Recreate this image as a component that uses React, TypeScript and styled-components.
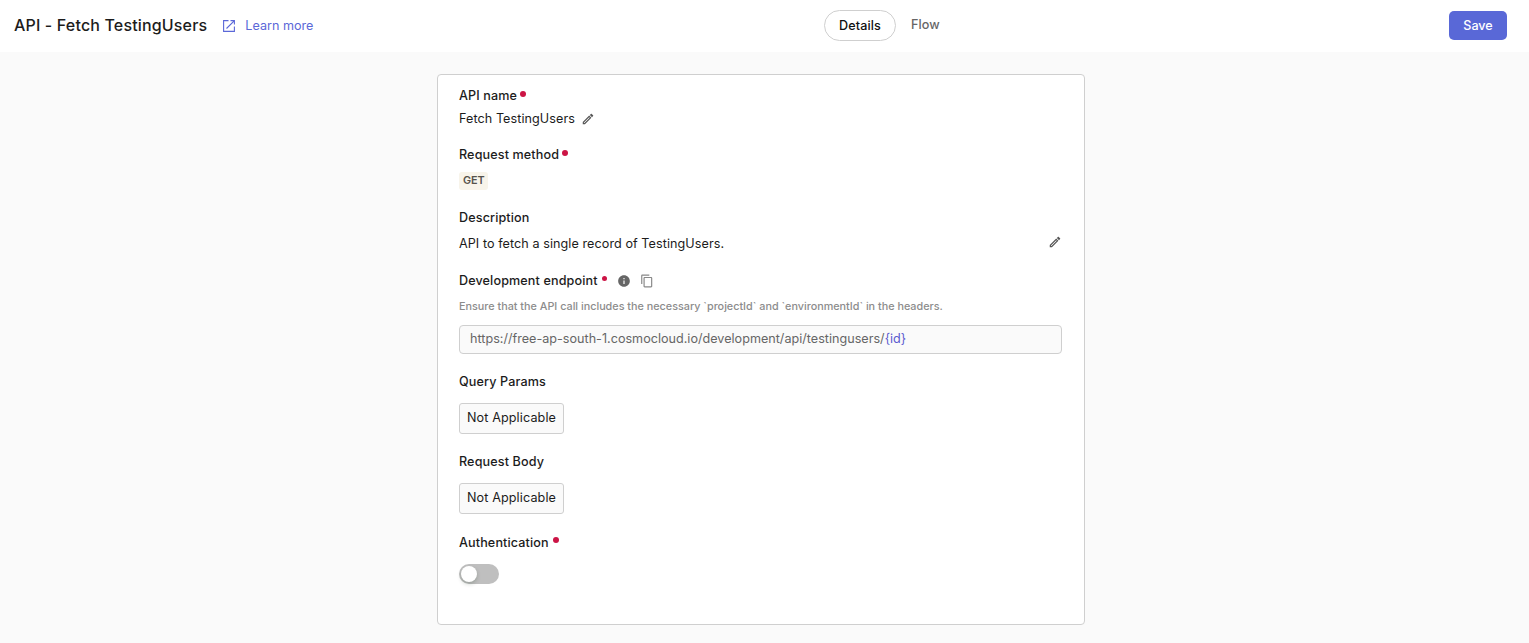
import React from "react";
import styled, { createGlobalStyle } from "styled-components";
import { MdContentCopy, MdInfo, MdOutlineEdit } from "react-icons/md";

const GlobalStyle = createGlobalStyle`
  * { box-sizing: border-box; }
  body {
    margin: 0;
    background: #fafafa;
    color: #1c1c1c;
    font-family: Inter, "Liberation Sans", sans-serif;
    font-size: 12.6px;
  }
`;

const Page = styled.div`
  min-height: 643px;
`;

const Header = styled.header`
  display: grid;
  grid-template-columns: 810px auto 1fr;
  height: 52px;
  padding: 0 22px 0 14px;
  background: #fff;
`;

const HeaderLeft = styled.div`
  display: flex;
  align-items: center;
  height: 51px;
`;

const Title = styled.h1`
  margin: 0 0 1px;
  font-size: 16px;
  font-weight: 500;
  line-height: 20px;
  letter-spacing: 0.16px;
`;

const LearnLink = styled.a`
  display: flex;
  align-items: center;
  gap: 10px;
  margin-left: 16px;
  color: #5b68d8;
  line-height: 20px;
`;

const Tabs = styled.nav`
  display: flex;
  gap: 15px;
  padding-top: 10px;
`;

const Tab = styled.button<{ $active?: boolean }>`
  height: ${(p) => (p.$active ? 31 : 29)}px;
  width: ${(p) => (p.$active ? "72px" : "auto")};
  padding: 0;
  border: ${(p) => (p.$active ? "1px solid #cfcfcf" : "0")};
  border-radius: 16px;
  background: #fff;
  color: ${(p) => (p.$active ? "#111" : "#666")};
  font: 500 12.6px Inter, sans-serif;
  letter-spacing: 0.1px;
`;

const HeaderRight = styled.div`
  display: flex;
  justify-content: flex-end;
  padding-top: 11px;
`;

const SaveButton = styled.button`
  width: 58px;
  height: 29px;
  padding: 0;
  border: 0;
  border-radius: 5px;
  background: #5968d7;
  color: #fff;
  font: 500 12.6px Inter, sans-serif;
`;

const Main = styled.main`
  display: flex;
  padding: 22px 0 0 437px;
`;

const Card = styled.section`
  width: 648px;
  height: 551px;
  padding: 10px 22px 0 21px;
  border: 1px solid #cfcfcf;
  border-radius: 4px;
  background: #fff;
`;

const Field = styled.div<{ $height: number }>`
  display: flex;
  flex-direction: column;
  align-items: flex-start;
  height: ${(p) => p.$height}px;
`;

const Label = styled.div`
  display: flex;
  align-items: center;
  height: 20px;
  font-weight: 500;
  letter-spacing: 0.12px;
  white-space: nowrap;
`;

const Dot = styled.span<{ $gap?: number; $size?: number; $lift?: number }>`
  width: ${(p) => p.$size ?? 6}px;
  height: ${(p) => p.$size ?? 6}px;
  margin: 0 0 ${(p) => p.$lift ?? 3}px ${(p) => p.$gap ?? 3}px;
  border-radius: 50%;
  background: #cc1445;
`;

const Value = styled.div<{ $top: number; $spread?: boolean }>`
  display: flex;
  align-items: center;
  justify-content: ${(p) => (p.$spread ? "space-between" : "flex-start")};
  width: 100%;
  height: 20px;
  margin-top: ${(p) => p.$top}px;
  letter-spacing: 0.07px;
`;

const EditIcon = styled(MdOutlineEdit)<{ $left?: number; $drop?: number; $lift?: number }>`
  margin: ${(p) => p.$drop ?? 0}px 0 ${(p) => p.$lift ?? 0}px ${(p) => p.$left ?? 0}px;
  color: #555;
`;

const InfoIcon = styled(MdInfo)`
  margin: 2px 0 0 10px;
  color: #666;
`;

const CopyIcon = styled(MdContentCopy)`
  margin: 2px 0 0 9px;
  color: #888;
`;

const Method = styled.span`
  height: 18px;
  margin-top: 8px;
  padding: 0 3px 0 4px;
  border-radius: 3px;
  background: #f8f4ea;
  color: #56524c;
  font-size: 10.8px;
  font-weight: 600;
  line-height: 17px;
`;

const Hint = styled.p`
  height: 16px;
  margin: 9px 0 0;
  color: #8c8c8c;
  font-size: 10.8px;
  font-weight: 500;
  line-height: 16px;
  white-space: nowrap;
`;

const Endpoint = styled.div`
  width: 603px;
  height: 29px;
  margin-top: 10px;
  padding-left: 10px;
  border: 1px solid #cfcfcf;
  border-radius: 4px;
  background: #fafafa;
  color: #666;
  line-height: 26px;
  letter-spacing: 0.01px;
`;

const PathParam = styled.span`
  color: #5b5bd0;
`;

const EmptyBox = styled.div`
  width: 105px;
  height: 31px;
  margin-top: 12px;
  border: 1px solid #cfcfcf;
  border-radius: 3px;
  background: #fafafa;
  line-height: 28px;
  letter-spacing: 0.12px;
  text-align: center;
`;

const Switch = styled.button`
  display: flex;
  align-items: center;
  width: 40px;
  height: 20px;
  margin-top: 12px;
  padding: 0 2px;
  border: 0;
  border-radius: 10px;
  background: #bfbfbf;
`;

const Knob = styled.span`
  width: 16px;
  height: 16px;
  border-radius: 50%;
  background: #fff;
  box-shadow: 0 2px 4px rgba(0, 35, 11, 0.2);
`;

function LaunchIcon() {
  return (
    <svg width="12" height="12" viewBox="0 0 12 12" fill="none" stroke="#5b68d8">
      <path d="M5.5 .6H.6v10.8h10.8V6.5" strokeWidth="1.1" />
      <path d="M7.5.6h3.9v3.9M11.2.8 3.5 8.5" strokeWidth="1.1" />
    </svg>
  );
}

export default function App() {
  return (
    <Page>
      <GlobalStyle />
      <Header>
        <HeaderLeft>
          <Title>API - Fetch TestingUsers</Title>
          <LearnLink>
            <LaunchIcon />
            Learn more
          </LearnLink>
        </HeaderLeft>
        <Tabs>
          <Tab $active>Details</Tab>
          <Tab>Flow</Tab>
        </Tabs>
        <HeaderRight>
          <SaveButton>Save</SaveButton>
        </HeaderRight>
      </Header>
      <Main>
        <Card>
          <Field $height={59}>
            <Label>API name<Dot /></Label>
            <Value $top={3}>Fetch TestingUsers<EditIcon size={14} $left={6} $drop={2} /></Value>
          </Field>
          <Field $height={63}>
            <Label>Request method<Dot /></Label>
            <Method>GET</Method>
          </Field>
          <Field $height={63}>
            <Label>Description</Label>
            <Value $top={6} $spread>
              API to fetch a single record of TestingUsers.
              <EditIcon size={14} $lift={2} />
            </Value>
          </Field>
          <Field $height={101}>
            <Label>Development endpoint<Dot $gap={4} $size={5} /><InfoIcon size={14} /><CopyIcon size={14} /></Label>
            <Hint>Ensure that the API call includes the necessary `projectId` and `environmentId` in the headers.</Hint>
            <Endpoint>
              https://free-ap-south-1.cosmocloud.io/development/api/testingusers/<PathParam>{"{id}"}</PathParam>
            </Endpoint>
          </Field>
          <Field $height={80}>
            <Label>Query Params</Label>
            <EmptyBox>Not Applicable</EmptyBox>
          </Field>
          <Field $height={81}>
            <Label>Request Body</Label>
            <EmptyBox>Not Applicable</EmptyBox>
          </Field>
          <Field $height={60}>
            <Label>Authentication<Dot $gap={4} $lift={5} /></Label>
            <Switch role="switch" aria-checked={false} aria-label="Authentication"><Knob /></Switch>
          </Field>
        </Card>
      </Main>
    </Page>
  );
}
